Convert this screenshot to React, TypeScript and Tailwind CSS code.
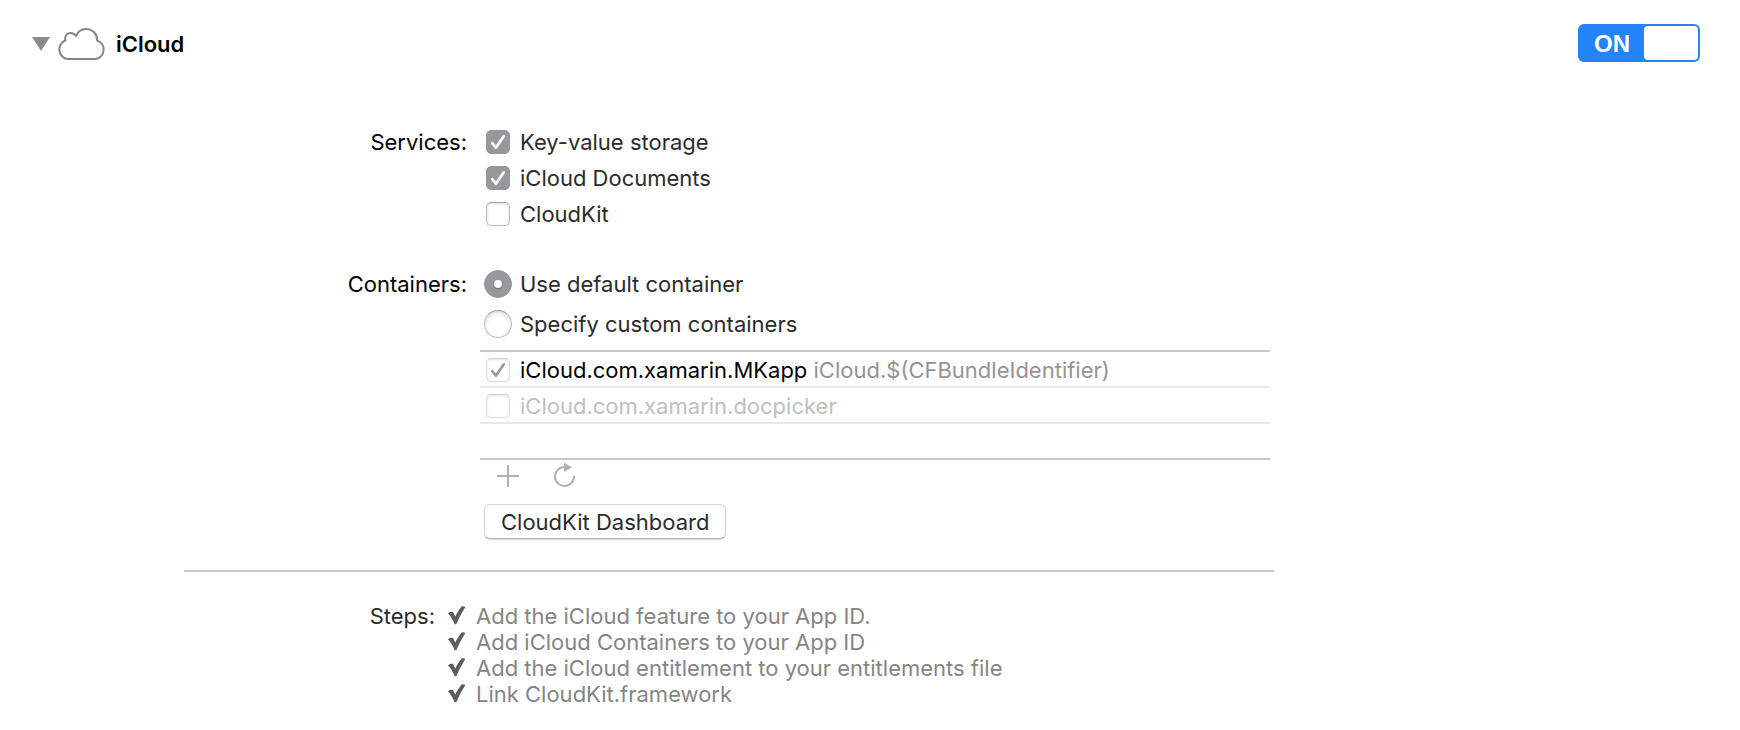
import { useState } from "react";
import type { ReactNode } from "react";

function CheckBox({
  id,
  checked,
  onChange,
  muted = false,
}: {
  id: string;
  checked: boolean;
  onChange: () => void;
  muted?: boolean;
}) {
  const box = muted
    ? "border-[#dcdcdc] border-t-[#d0d0d0] bg-white shadow-[inset_0_1px_3px_rgba(0,0,0,0.1)]"
    : checked
      ? "border-[#98979c] bg-[#98979c]"
      : "border-[#bdbdbd] border-t-[#a4a4a4] bg-white shadow-[inset_0_1px_3px_rgba(0,0,0,0.15)]";
  return (
    <span className="grid size-6 shrink-0 place-items-center">
      <input
        id={id}
        type="checkbox"
        checked={checked}
        onChange={onChange}
        className={`col-start-1 row-start-1 size-6 appearance-none rounded-[5px] border ${box}`}
      />
      {checked && (
        <svg
          viewBox="0 0 24 24"
          aria-hidden="true"
          className={`pointer-events-none z-10 col-start-1 row-start-1 size-6 ${muted ? "text-[#9b9b9b]" : "text-white"}`}
        >
          <path
            d="M6.2 13.2 9.900 17.700 17.800 6.300"
            fill="none"
            stroke="currentColor"
            strokeWidth="2.700"
            strokeLinecap="round"
            strokeLinejoin="round"
          />
        </svg>
      )}
    </span>
  );
}

function RadioButton({
  id,
  checked,
  onChange,
}: {
  id: string;
  checked: boolean;
  onChange: () => void;
}) {
  const ring = checked
    ? "border-[#98979c] bg-[#98979c]"
    : "border-[#bdbdbd] border-t-[#a0a0a0] bg-white shadow-[inset_0_2px_4px_rgba(0,0,0,0.15)]";
  return (
    <span className="grid size-7 shrink-0 place-items-center">
      <input
        id={id}
        type="radio"
        name="container-mode"
        checked={checked}
        onChange={onChange}
        className={`col-start-1 row-start-1 size-7 appearance-none rounded-full border ${ring}`}
      />
      {checked && (
        <span className="pointer-events-none z-10 col-start-1 row-start-1 size-2 rounded-full bg-white shadow-[0_1px_2px_rgba(0,0,0,0.3)]" />
      )}
    </span>
  );
}

function StepMark() {
  return (
    <svg viewBox="0 0 18 20" aria-hidden="true" className="h-5 w-[18px] shrink-0 text-[#5d5d5d]">
      <path
        d="M0 7.200C1.700 6 3.400 5.600 5 6L7.300 10.400C9.200 6.700 11.400 3.200 13.800.300 15.200-.100 16.500.200 17.300 1.200 13.900 6.300 11 12 8.300 18.300H6.600C5 14.200 3 10.400 0 7.200Z"
        fill="currentColor"
      />
    </svg>
  );
}

function FormRow({ label, children }: { label: string; children: ReactNode }) {
  return (
    <div role="group" aria-label={label} className="grid grid-cols-[284px_1fr] gap-x-3">
      <span className="pr-px text-right leading-9 text-black">{label}:</span>
      <div>{children}</div>
    </div>
  );
}

const serviceNames = ["Key-value storage", "iCloud Documents", "CloudKit"];
const modes = ["Use default container", "Specify custom containers"];
const containers = [
  { name: "iCloud.com.xamarin.MKapp", detail: "iCloud.$(CFBundleIdentifier)" },
  { name: "iCloud.com.xamarin.docpicker", detail: "" },
];
const steps = [
  "Add the iCloud feature to your App ID.",
  "Add iCloud Containers to your App ID",
  "Add the iCloud entitlement to your entitlements file",
  "Link CloudKit.framework",
];

function toggleAt(list: boolean[], index: number) {
  return list.map((value, i) => (i === index ? !value : value));
}

export default function App() {
  const [open, setOpen] = useState(true);
  const [on, setOn] = useState(true);
  const [services, setServices] = useState([true, true, false]);
  const [mode, setMode] = useState(0);
  const [selected, setSelected] = useState([true, false]);

  return (
    <main className="min-h-screen bg-white pb-6 font-[Inter,sans-serif] text-[22px] text-[#2b2b2b]">
      <header className="flex items-center justify-between pt-6 pr-10 pl-8">
        <h1 className="pt-0.5 text-[22px] leading-8 font-semibold text-black">
          <button
            type="button"
            aria-expanded={open}
            onClick={() => setOpen(!open)}
            className="flex items-center"
          >
            <svg viewBox="0 0 18 14" aria-hidden="true" className={`h-3.5 w-[18px] ${open ? "" : "-rotate-90"}`}>
              <path d="M0 0H18L9 14Z" fill="#8c8c8c" />
            </svg>
            <svg viewBox="0 0 48 32" aria-hidden="true" className="mx-2 h-8 w-12">
              <path
                d="M10.500 31A9.600 9.600 0 0 1 7.300 12.500C6.400 7.200 9.500 4.900 12.700 4.900 15 4.900 17 6 18.100 7.900 20 3.500 23.600 1 28 1 34.500 1 39.300 6 39.200 12.500A9.600 9.600 0 0 1 37.800 31Z"
                fill="none"
                stroke="#868686"
                strokeWidth="2"
                strokeLinejoin="round"
              />
            </svg>
            <span className="pl-0.5">iCloud</span>
          </button>
        </h1>
        <button
          type="button"
          role="switch"
          aria-checked={on}
          aria-label="iCloud"
          onClick={() => setOn(!on)}
          className={`flex h-[38px] w-[122px] items-stretch rounded-md p-0.5 ${on ? "bg-[#2483f7]" : "flex-row-reverse bg-[#b5b5b5]"}`}
        >
          <span className="flex flex-1 items-center justify-center pt-0.5 font-['Liberation_Sans',sans-serif] text-2xl font-bold text-white">
            {on ? "ON" : "OFF"}
          </span>
          <span className="w-[54px] rounded-sm bg-white" />
        </button>
      </header>

      {open && (
        <section className="mt-[62px] ml-[184px] max-w-[1090px]">
          <FormRow label="Services">
            {serviceNames.map((name, i) => (
              <div key={name} className="flex h-9 items-center pl-1.5">
                <CheckBox
                  id={`service-${i}`}
                  checked={services[i]}
                  onChange={() => setServices(toggleAt(services, i))}
                />
                <label htmlFor={`service-${i}`} className="pl-2.5">
                  {name}
                </label>
              </div>
            ))}
          </FormRow>

          <div className="mt-[34px] pr-1">
            <FormRow label="Containers">
              <div className="-mt-0.5">
                {modes.map((name, i) => (
                  <div key={name} className="flex h-10 items-center pl-1">
                    <RadioButton id={`mode-${i}`} checked={mode === i} onChange={() => setMode(i)} />
                    <label htmlFor={`mode-${i}`} className="pl-2">
                      {name}
                    </label>
                  </div>
                ))}
              </div>
              <ul className="mt-1.5 border-y-2 border-[#c8c8c8]">
                {containers.map((item, i) => (
                  <li key={item.name} className="flex h-9 items-center border-b-2 border-[#e8e8e8] pt-0.5 pl-1.5">
                    <CheckBox
                      id={`container-${i}`}
                      muted
                      checked={selected[i]}
                      onChange={() => setSelected(toggleAt(selected, i))}
                    />
                    <label
                      htmlFor={`container-${i}`}
                      className={`pl-2.5 ${selected[i] ? "text-black" : "text-[#c0c0c0]"}`}
                    >
                      {item.name}
                      {item.detail && <span className="text-[#949494]"> {item.detail}</span>}
                    </label>
                  </li>
                ))}
                <li aria-hidden="true" className="h-[34px]" />
              </ul>
              <div className="flex h-8 items-center gap-8 pl-4">
                <button type="button" aria-label="Add container" className="text-[#b0b0b0]">
                  <svg viewBox="0 0 24 24" aria-hidden="true" className="size-6">
                    <path d="M1 12H23M12 1V23" fill="none" stroke="currentColor" strokeWidth="2" />
                  </svg>
                </button>
                <button type="button" aria-label="Refresh containers" className="text-[#b0b0b0]">
                  <svg viewBox="0 0 24 24" aria-hidden="true" className="size-6 overflow-visible">
                    <path
                      d="M12.500 3A9.500 9.500 0 1 0 22 12"
                      fill="none"
                      stroke="currentColor"
                      strokeWidth="2"
                    />
                    <path d="M12 -1.300V8L20 3.300Z" fill="currentColor" />
                  </svg>
                </button>
              </div>
              <button
                type="button"
                className="mt-3 ml-1 flex h-[35px] items-center rounded-md border border-[#d2d2d2] border-b-[#b4b4b4] bg-white px-4 pt-px shadow-[0_1px_1px_rgba(0,0,0,0.15)]"
              >
                CloudKit Dashboard
              </button>
            </FormRow>
          </div>

          <hr className="mt-[31px] border-t-2 border-[#c8c8c8]" />

          <div className="mt-[31px] grid grid-cols-[252px_1fr] gap-x-3 leading-[26px]">
            <h2 className="pr-px text-right">Steps:</h2>
            <ul className="text-[#858585]">
              {steps.map((step) => (
                <li key={step} className="flex items-center gap-2.5">
                  <StepMark />
                  {step}
                </li>
              ))}
            </ul>
          </div>
        </section>
      )}
    </main>
  );
}
